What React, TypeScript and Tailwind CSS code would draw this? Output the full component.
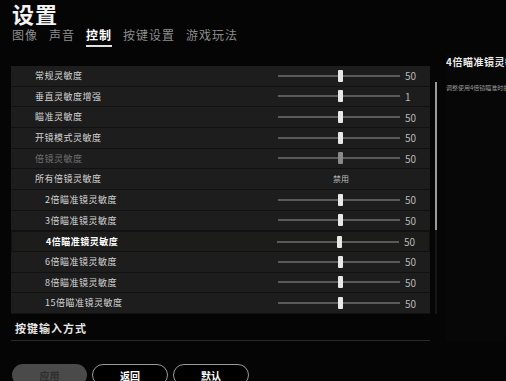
import React from "react";

type Row = {
  label: string;
  value?: string;
  sub?: boolean;
  dim?: boolean;
  disabled?: string;
  active?: boolean;
};

const rows: Row[] = [
  { label: "常规灵敏度", value: "50" },
  { label: "垂直灵敏度增强", value: "1" },
  { label: "瞄准灵敏度", value: "50" },
  { label: "开镜模式灵敏度", value: "50" },
  { label: "倍镜灵敏度", value: "50", dim: true },
  { label: "所有倍镜灵敏度", disabled: "禁用" },
  { label: "2倍瞄准镜灵敏度", value: "50", sub: true },
  { label: "3倍瞄准镜灵敏度", value: "50", sub: true },
  { label: "4倍瞄准镜灵敏度", value: "50", sub: true, active: true },
  { label: "6倍瞄准镜灵敏度", value: "50", sub: true },
  { label: "8倍瞄准镜灵敏度", value: "50", sub: true },
  { label: "15倍瞄准镜灵敏度", value: "50", sub: true },
];

const tabs = ["图像", "声音", "控制", "按键设置", "游戏玩法"];

const Slider = ({ value, dim }: { value: string; dim?: boolean }) => (
  <div className="flex items-center">
    <div className="relative h-[12px] w-[122px]">
      <div className="absolute left-0 right-0 top-[5px] h-[2px] bg-[#5a5a5a]" />
      <div
        className={`absolute left-[60px] top-0 h-[12px] w-[5px] rounded-[1px] ${
          dim ? "bg-[#8a8a8a]" : "bg-[#e8e8e8]"
        }`}
      />
    </div>
    <span className="ml-[5px] w-[24px] text-[10px] text-[#b8b8b8]">{value}</span>
  </div>
);

const App = () => {
  return (
    <div
      className="relative h-[381px] w-[506px] overflow-hidden bg-[#050505] text-white"
      style={{ fontFamily: '"Noto Sans CJK SC", "Noto Sans", sans-serif' }}
    >
      {/* header */}
      <div className="h-[54px] pl-[12px]">
        <h1 className="h-[27px] text-[22px] font-bold leading-[27px] tracking-[1px] text-[#f2f2f2]">
          设置
        </h1>
        <div className="flex gap-[11px] text-[12px] leading-[16px]">
          {tabs.map((t) => (
            <div key={t} className="flex flex-col items-start">
              <span
                className={`tracking-[1px] ${
                  t === "控制" ? "font-bold text-white" : "text-[#8c8c8c]"
                }`}
              >
                {t}
              </span>
              {t === "控制" && <div className="mt-[2px] h-[2px] w-[26px] bg-[#e0e0e0]" />}
            </div>
          ))}
        </div>
      </div>

      <div className="flex">
        <div className="ml-[11px] mt-[12px] w-[419px]">
          <div className="flex flex-col">
            {rows.map((r) => (
              <div
                key={r.label}
                className={`flex h-[20.67px] items-center justify-between border-b border-[#111111] pr-[1px] ${
                  r.active
                    ? "border border-[#8a8338] bg-[#1c1c1a]"
                    : "bg-[#1d1d1d]"
                }`}
              >
                <span
                  className={`text-[9px] tracking-[0.5px] ${r.sub ? "pl-[34px]" : "pl-[24px]"} ${
                    r.dim ? "text-[#707070]" : "text-[#d4d4d4]"
                  } ${r.active ? "font-bold text-white" : ""}`}
                >
                  {r.label}
                </span>
                {r.value ? (
                  <Slider value={r.value} dim={r.dim} />
                ) : (
                  <span className="mr-[80px] text-[8px] text-[#bdbdbd]">{r.disabled}</span>
                )}
              </div>
            ))}
          </div>
          <div className="mt-[6px] border-b border-[#2a2a2a] pb-[4px] pl-[4px] text-[11px] font-bold tracking-[1px] text-[#e6e6e6]">
            按键输入方式
          </div>
        </div>

        <div className="ml-[5px] mt-[28px] flex h-[232px] w-[3px] flex-col">
          <div className="h-[148px] w-[2px] bg-[#9a9a9a]" />
          <div className="w-[2px] flex-1 bg-[#161616]" />
        </div>

        <div className="ml-[8px] flex-1 overflow-hidden whitespace-nowrap bg-[#070707]">
          <div className="text-[10px] font-bold leading-[16px] tracking-[0.5px] text-[#eaeaea]">
            4倍瞄准镜灵敏度
          </div>
          <div className="mt-[14px] text-[6px] leading-[8px] text-[#9a9a9a]">
            调整使用4倍镜瞄准时的灵敏度
          </div>
        </div>
      </div>

      <div className="absolute bottom-[-5px] left-[12px] flex gap-[5px]">
        <button className="h-[22px] w-[75px] rounded-full bg-[#4a4a4a] text-[10px] font-bold text-[#2e2e2e]">
          应用
        </button>
        <button className="h-[22px] w-[76px] rounded-full border border-[#9a9a9a] bg-black text-[10px] font-bold text-white">
          返回
        </button>
        <button className="h-[22px] w-[76px] rounded-full border border-[#9a9a9a] bg-black text-[10px] font-bold text-white">
          默认
        </button>
      </div>
    </div>
  );
};

export default App;
